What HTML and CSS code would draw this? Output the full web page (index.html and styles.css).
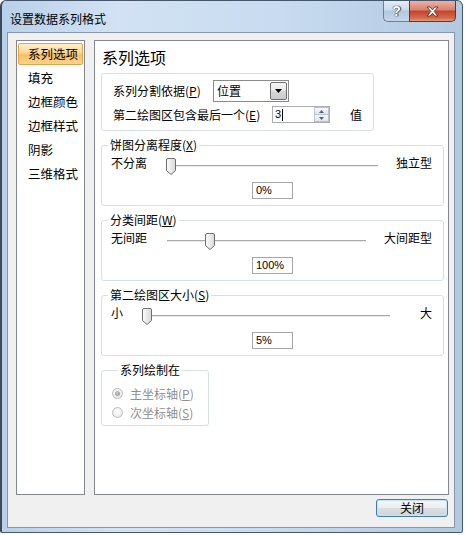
FILE: index.html
```html
<!DOCTYPE html>
<html lang="zh-CN">
<head>
<meta charset="utf-8">
<title>设置数据系列格式</title>
<link rel="stylesheet" href="styles.css">
</head>
<body>
<div class="window">
  <div class="titlebar">
    <span class="title">设置数据系列格式</span>
    <div class="caption-btns">
      <span class="cbtn help">?</span>
      <span class="cbtn close">
        <svg width="13" height="11" viewBox="0 0 13 11"><path d="M1 1 H4.2 L6.5 3.8 L8.8 1 H12 L8.2 5.5 L12 10 H8.8 L6.5 7.2 L4.2 10 H1 L4.8 5.5 Z" fill="#fff" stroke="#5a2a22" stroke-width="0.9" stroke-linejoin="round"/></svg>
      </span>
    </div>
  </div>
  <div class="client">
    <div class="main">
      <ul class="nav">
        <li class="nav-item active">系列选项</li>
        <li class="nav-item">填充</li>
        <li class="nav-item">边框颜色</li>
        <li class="nav-item">边框样式</li>
        <li class="nav-item">阴影</li>
        <li class="nav-item">三维格式</li>
      </ul>
      <div class="panel">
        <h2 class="panel-title">系列选项</h2>
        <div class="box">
          <div class="frow">
            <span class="flabel w-split">系列分割依据(<u>P</u>)</span>
            <div class="combo">
              <span class="combo-text">位置</span>
              <span class="combo-btn"><svg width="7" height="4" viewBox="0 0 7 4"><path d="M0 0 H7 L3.5 4 Z" fill="#000"/></svg></span>
            </div>
          </div>
          <div class="frow">
            <span class="flabel w-last">第二绘图区包含最后一个(<u>E</u>)</span>
            <div class="spin">
              <span class="spin-text">3<span class="caret"></span></span>
              <span class="spin-btns">
                <span class="spin-up"><svg width="5" height="3" viewBox="0 0 5 3"><path d="M0 3 L2.5 0 L5 3 Z" fill="#4e6181"/></svg></span>
                <span class="spin-down"><svg width="5" height="3" viewBox="0 0 5 3"><path d="M0 0 H5 L2.5 3 Z" fill="#4e6181"/></svg></span>
              </span>
            </div>
            <span class="unit">值</span>
          </div>
        </div>

        <fieldset class="group">
          <legend>饼图分离程度(<u>X</u>)</legend>
          <div class="slider s-x">
            <span class="ll">不分离</span>
            <div class="track"><span class="thumb" style="--pos:0"><svg width="10" height="17" viewBox="0 0 10 17"><defs><linearGradient id="tg1" x1="0" x2="1" y1="0" y2="0"><stop offset="0" stop-color="#fdfdfd"/><stop offset="1" stop-color="#d8d8d8"/></linearGradient></defs><path d="M0.5 2 Q0.5 0.5 2 0.5 H8 Q9.5 0.5 9.5 2 V12.5 L5 16.5 L0.5 12.5 Z" fill="url(#tg1)" stroke="#707070"/></svg></span></div>
            <span class="rl">独立型</span>
          </div>
          <div class="val">0%</div>
        </fieldset>

        <fieldset class="group">
          <legend>分类间距(<u>W</u>)</legend>
          <div class="slider s-w">
            <span class="ll">无间距</span>
            <div class="track"><span class="thumb" style="--pos:0.2"><svg width="10" height="17" viewBox="0 0 10 17"><defs><linearGradient id="tg2" x1="0" x2="1" y1="0" y2="0"><stop offset="0" stop-color="#fdfdfd"/><stop offset="1" stop-color="#d8d8d8"/></linearGradient></defs><path d="M0.5 2 Q0.5 0.5 2 0.5 H8 Q9.5 0.5 9.5 2 V12.5 L5 16.5 L0.5 12.5 Z" fill="url(#tg2)" stroke="#707070"/></svg></span></div>
            <span class="rl">大间距型</span>
          </div>
          <div class="val">100%</div>
        </fieldset>

        <fieldset class="group">
          <legend>第二绘图区大小(<u>S</u>)</legend>
          <div class="slider s-s">
            <span class="ll">小</span>
            <div class="track"><span class="thumb" style="--pos:0"><svg width="10" height="17" viewBox="0 0 10 17"><defs><linearGradient id="tg3" x1="0" x2="1" y1="0" y2="0"><stop offset="0" stop-color="#fdfdfd"/><stop offset="1" stop-color="#d8d8d8"/></linearGradient></defs><path d="M0.5 2 Q0.5 0.5 2 0.5 H8 Q9.5 0.5 9.5 2 V12.5 L5 16.5 L0.5 12.5 Z" fill="url(#tg3)" stroke="#707070"/></svg></span></div>
            <span class="rl">大</span>
          </div>
          <div class="val">5%</div>
        </fieldset>

        <fieldset class="group axes">
          <legend>系列绘制在</legend>
          <div class="radio-row"><span class="radio checked"></span>主坐标轴(<u>P</u>)</div>
          <div class="radio-row"><span class="radio"></span>次坐标轴(<u>S</u>)</div>
        </fieldset>
      </div>
    </div>
    <div class="footer">
      <button class="btn" type="button">关闭</button>
    </div>
  </div>
</div>
</body>
</html>
```
FILE: styles.css
```css
* { box-sizing: border-box; }

body {
  margin: 0;
  background: #fff;
  font-family: "Noto Sans CJK SC", "Noto Sans", sans-serif;
  font-size: 12px;
  color: #000;
}

u { text-decoration: underline; }

.window {
  width: 463px;
  height: 533px;
  border: 1px solid #44576d;
  border-left: 2px solid #3c4a5a;
  border-radius: 6px 6px 2px 2px;
  background: linear-gradient(to right, #b9d0ea 0, #d2e2f4 25%, #c8dbf0 60%, #b2c9e2 100%);
  display: flex;
  flex-direction: column;
}

.titlebar {
  height: 31px;
  display: flex;
  align-items: flex-start;
  padding: 0 6px 0 8px;
}

.title {
  line-height: 16px;
  margin-top: 10px;
}

.caption-btns {
  margin-left: auto;
  display: flex;
}

.cbtn {
  height: 21px;
  display: flex;
  align-items: center;
  justify-content: center;
}

.help {
  width: 26px;
  border: 1px solid #6c7f96;
  border-top: none;
  border-right: none;
  border-radius: 0 0 0 5px;
  background: linear-gradient(#e3edf7, #cbdaea 45%, #b3c8de 50%, #c4d6ea);
  color: #fff;
  font-family: "Liberation Sans", sans-serif;
  font-weight: bold;
  font-size: 14px;
  text-shadow: 0 0 1px #2f3d4e, 0 0 1px #2f3d4e, 1px 0 1px #2f3d4e;
}

.close {
  width: 47px;
  border: 1px solid #6e3128;
  border-top: none;
  border-radius: 0 0 5px 0;
  background: linear-gradient(#eab2a6, #d8826f 45%, #c4432c 50%, #d36a4f 85%, #e49a7d);
}

.client {
  margin: 0 7px 0 5px;
  height: 496px;
  border: 1px solid #8796aa;
  background: #f0f0f0;
  padding: 7px 5px 0 8px;
  display: flex;
  flex-direction: column;
}

.main {
  display: flex;
  gap: 9px;
  height: 455px;
}

.nav {
  list-style: none;
  margin: 0;
  padding: 1px 1px 0;
  width: 69px;
  background: #fff;
  border: 1px solid #828790;
}

.nav-item {
  height: 24px;
  line-height: 24px;
  padding-left: 10px;
  font-size: 12.5px;
}

.nav-item.active {
  height: 22px;
  margin: 1px 0;
  line-height: 20px;
  padding-left: 9px;
  border: 1px solid #e4a24a;
  border-radius: 2px;
  background: linear-gradient(#fdefcc, #fcd99a 40%, #f9c063 55%, #fbd38c);
}

.panel {
  flex: 1;
  background: #fff;
  border: 1px solid #828790;
}

.panel-title {
  margin: 6px 0 0 7px;
  font-size: 16px;
  line-height: 20px;
  font-weight: normal;
}

.box {
  margin: 6px 0 0 6px;
  width: 273px;
  border: 1px solid #d5dfe5;
  border-radius: 3px;
  padding: 6px 0 7px 11px;
}

.frow {
  display: flex;
  align-items: center;
}

.frow + .frow { margin-top: 4px; }

.flabel { line-height: 16px; }
.w-split { width: 100px; }
.w-last { width: 159px; }

.combo {
  width: 76px;
  height: 22px;
  border: 1px solid #8a8a8a;
  background: #fff;
  display: flex;
}

.combo-text {
  flex: 1;
  padding-left: 3px;
  line-height: 20px;
}

.combo-btn {
  width: 17px;
  margin: 1px;
  border: 1px solid #707070;
  border-radius: 2px;
  background: linear-gradient(#f4f4f4, #e9e9e9 50%, #d9d9d9 50%, #cbcbcb);
  display: flex;
  align-items: center;
  justify-content: center;
}

.spin {
  width: 58px;
  height: 17px;
  border: 1px solid #abadb3;
  background: #fff;
  display: flex;
}

.spin-text {
  flex: 1;
  padding-left: 2px;
  font-family: "Liberation Sans", sans-serif;
  font-size: 11px;
  line-height: 15px;
  display: flex;
  align-items: center;
}

.caret {
  width: 1px;
  height: 12px;
  background: #000;
  margin-left: 1px;
}

.spin-btns {
  width: 15px;
  display: flex;
  flex-direction: column;
}

.spin-up, .spin-down {
  flex: 1;
  border: 1px solid #b9c3cf;
  background: linear-gradient(#f6f8fa, #dfe5ec);
  display: flex;
  align-items: center;
  justify-content: center;
}

.spin-down { border-top: none; }

.unit { margin-left: 20px; line-height: 16px; }

.group {
  margin: 6px 0 0 6px;
  width: 343px;
  min-width: 0;
  border: 1px solid #d5dfe5;
  border-radius: 3px;
  padding: 0 0 6px;
}

.group legend {
  margin-left: 6px;
  padding: 0 2px;
  line-height: 16px;
}

.slider {
  display: grid;
  grid-template-columns: var(--lw) 1fr var(--rw);
  height: 20px;
  margin-top: 2px;
  padding: 0 11px 0 9px;
}

.s-x { --lw: 55px; --rw: 54px; }
.s-w { --lw: 56px; --rw: 66px; }
.s-s { --lw: 31px; --rw: 42px; }

.ll, .rl { line-height: 16px; white-space: nowrap; }
.rl { text-align: right; }

.track {
  position: relative;
  height: 2px;
  margin-top: 10px;
  border-top: 1px solid #a9a9a9;
  background: #e9e9e9;
}

.thumb {
  position: absolute;
  top: -8px;
  left: calc(var(--pos) * (100% - 10px));
  width: 10px;
  height: 17px;
  display: block;
}

.thumb svg { display: block; }

.val {
  width: 41px;
  height: 17px;
  margin: 7px auto 0;
  border: 1px solid #a7a7a7;
  background: #fff;
  font-family: "Liberation Sans", sans-serif;
  font-size: 11px;
  line-height: 15px;
  padding-left: 3px;
}

.group.axes {
  width: 108px;
  padding: 6px 0 3px 10px;
}

.radio-row {
  display: flex;
  align-items: center;
  height: 19px;
  color: #8f8f8f;
  line-height: 16px;
}

.radio {
  position: relative;
  width: 11px;
  height: 11px;
  margin-right: 7px;
  border-radius: 50%;
  border: 1px solid #bdbdbd;
  background: radial-gradient(circle at 50% 40%, #ffffff, #e3e3e3);
}

.radio.checked::after {
  content: "";
  position: absolute;
  inset: 2px;
  border-radius: 50%;
  background: radial-gradient(circle at 45% 40%, #c9c9c9, #8f8f8f);
}

.footer {
  display: flex;
  justify-content: flex-end;
  padding: 4px 1px 0 0;
}

.btn {
  width: 72px;
  height: 18px;
  padding: 0;
  border: 1px solid #3c7fb1;
  border-radius: 3px;
  background: linear-gradient(#f4f6f8, #eceef0 50%, #dcdfe2 50%, #d2d5d9);
  box-shadow: inset 0 0 0 1px #c6e4f7;
  font-family: "Noto Sans CJK SC", sans-serif;
  font-size: 12px;
  line-height: 16px;
  color: #000;
}
```
